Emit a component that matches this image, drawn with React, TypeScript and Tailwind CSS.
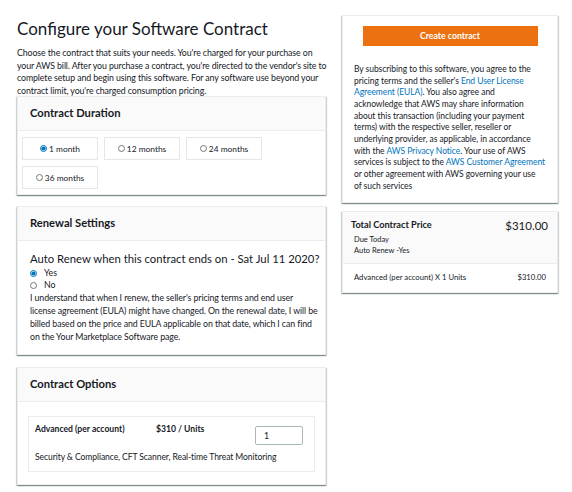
import { useState } from 'react'

const FONT = { fontFamily: 'Lato, "Noto Sans", Arial, sans-serif' }

const DURATIONS = ['1 month', '12 months', '24 months', '36 months']

const SHADOW =
  'shadow-[0_1px_1px_0_rgba(0,28,36,0.3),1px_1px_1px_0_rgba(0,28,36,0.15),-1px_1px_1px_0_rgba(0,28,36,0.15)]'

function Card({ title, children }: { title: string; children: React.ReactNode }) {
  return (
    <div className={`bg-white border border-[#eaeded] ${SHADOW}`}>
      <div className="h-[34px] px-[12px] flex items-center bg-[#fafafa] border-b border-[#eaeded]">
        <h2 className="text-[11.2px] font-bold text-[#16191f]">{title}</h2>
      </div>
      {children}
    </div>
  )
}

export default function App() {
  const [duration, setDuration] = useState('1 month')
  const [renew, setRenew] = useState(true)
  const [units, setUnits] = useState('1')

  return (
    <div style={FONT} className="w-[572px] h-[492px] overflow-hidden bg-white text-[#16191f] flex gap-[16px] pl-[17px] pt-[15px]">
      <div className="w-[309px] shrink-0 flex flex-col pt-[3px]">
        <h1 className="text-[17px] leading-[22px] text-[#16191f]">Configure your Software Contract</h1>
        <p className="text-[8.8px] leading-[12.6px] tracking-[-0.1px] mt-[7px] whitespace-nowrap">
          Choose the contract that suits your needs. You're charged for your purchase on
          <br />
          your AWS bill. After you purchase a contract, you're directed to the vendor's site to
          <br />
          complete setup and begin using this software. For any software use beyond your
          <br />
          contract limit, you're charged consumption pricing.
        </p>

        <div className="mt-[-1px]">
          <Card title="Contract Duration">
            <div className="pl-[4px] pt-[6px] pb-[5px] flex flex-wrap gap-x-[6px] gap-y-[6px]">
              {DURATIONS.map((d) => (
                <label
                  key={d}
                  className="w-[76px] h-[23px] border border-[#e4e7e8] flex items-center justify-center gap-[2px] text-[8.4px] cursor-pointer"
                >
                  <input
                    type="radio"
                    name="duration"
                    checked={duration === d}
                    onChange={() => setDuration(d)}
                    className="w-[7px] h-[7px] m-0 accent-[#0073bb]"
                  />
                  {d}
                </label>
              ))}
            </div>
          </Card>
        </div>

        <div className="mt-[11px]">
          <Card title="Renewal Settings">
            <div className="pl-[12px] pt-[10px] pb-[11px]">
              <p className="text-[11.3px] leading-[15px] whitespace-nowrap">Auto Renew when this contract ends on - Sat Jul 11 2020?</p>
              <label className="flex items-center gap-[7px] text-[8.8px] leading-[12px] mt-[1px]">
                <input type="radio" name="renew" checked={renew} onChange={() => setRenew(true)} className="w-[7px] h-[7px] m-0 accent-[#0073bb]" />
                Yes
              </label>
              <label className="flex items-center gap-[7px] text-[8.8px] leading-[12px]">
                <input type="radio" name="renew" checked={!renew} onChange={() => setRenew(false)} className="w-[7px] h-[7px] m-0 accent-[#0073bb]" />
                No
              </label>
              <p className="text-[8.8px] leading-[13px] tracking-[-0.1px] whitespace-nowrap">
                I understand that when I renew, the seller's pricing terms and end user
                <br />
                license agreement (EULA) might have changed. On the renewal date, I will be
                <br />
                billed based on the price and EULA applicable on that date, which I can find
                <br />
                on the Your Marketplace Software page.
              </p>
            </div>
          </Card>
        </div>

        <div className="mt-[12px]">
          <Card title="Contract Options">
            <div className="px-[10px] pt-[14px] pb-[12px]">
              <div className="border border-[#eaeded] pl-[6px] pt-[6px] pb-[8px]">
                <div className="flex items-start">
                  <span className="w-[121px] text-[8.6px] leading-[12px] font-bold">Advanced (per account)</span>
                  <span className="w-[99px] text-[8.6px] leading-[12px] font-bold">$310 / Units</span>
                  <input
                    value={units}
                    onChange={(e) => setUnits(e.target.value)}
                    className="w-[48px] h-[19px] mt-[3px] border border-[#aab7b8] rounded-[2px] px-[8px] text-[8.8px] outline-none"
                  />
                </div>
                <p className="text-[8.6px] leading-[12px] tracking-[-0.1px] mt-[6px]">Security &amp; Compliance, CFT Scanner, Real-time Threat Monitoring</p>
              </div>
            </div>
          </Card>
        </div>
      </div>

      <div className="w-[216px] shrink-0 flex flex-col">
        <div className={`bg-white border border-[#eaeded] ${SHADOW} px-[11px] pt-[10px] pb-[10px]`}>
          <button className="w-[175px] h-[20px] mx-auto block bg-[#ec7211] text-white text-[8.7px] font-bold">Create contract</button>
          <p className="text-[8.5px] leading-[11.67px] tracking-[-0.05px] mt-[18px] whitespace-nowrap">
            By subscribing to this software, you agree to the
            <br />
            pricing terms and the seller's <a className="text-[#0073bb]">End User License</a>
            <br />
            <a className="text-[#0073bb]">Agreement (EULA)</a>. You also agree and
            <br />
            acknowledge that AWS may share information
            <br />
            about this transaction (including your payment
            <br />
            terms) with the respective seller, reseller or
            <br />
            underlying provider, as applicable, in accordance
            <br />
            with the <a className="text-[#0073bb]">AWS Privacy Notice</a>. Your use of AWS
            <br />
            services is subject to the <a className="text-[#0073bb]">AWS Customer Agreement</a>
            <br />
            or other agreement with AWS governing your use
            <br />
            of such services
          </p>
        </div>

        <div className={`mt-[8px] bg-white border border-[#eaeded] ${SHADOW}`}>
          <div className="bg-[#fafafa] border-b border-[#eaeded] pl-[8px] pr-[9px] pt-[6px] pb-[6px]">
            <div className="flex justify-between items-center h-[14px]">
              <span className="text-[9.2px] font-bold">Total Contract Price</span>
              <span className="text-[11.5px]">$310.00</span>
            </div>
            <div className="pl-[3px] text-[7.5px] leading-[10.7px] mt-[3px]">
              <div>Due Today</div>
              <div>Auto Renew -Yes</div>
            </div>
          </div>
          <div className="px-[11px] h-[28px] flex items-center justify-between text-[7.7px]">
            <span>Advanced (per account) X 1 Units</span>
            <span>$310.00</span>
          </div>
        </div>
      </div>
    </div>
  )
}
